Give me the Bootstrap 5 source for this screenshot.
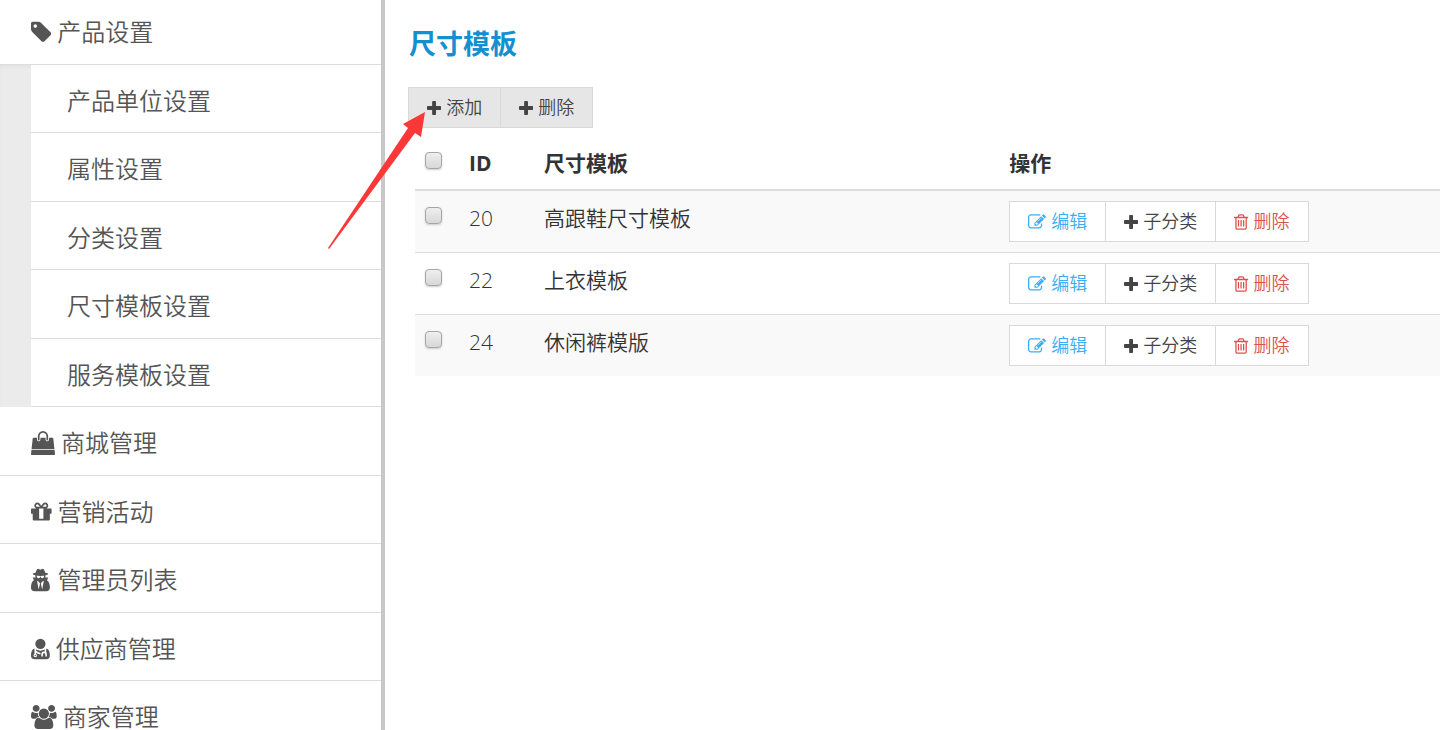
<!DOCTYPE html>
<html lang="zh-CN">
<head>
<meta charset="utf-8">
<meta name="viewport" content="width=device-width, initial-scale=1">
<title>尺寸模板</title>
<link href="https://cdn.jsdelivr.net/npm/bootstrap@5.3.0/dist/css/bootstrap.min.css" rel="stylesheet">
<style>
body { font-family: "Open Sans", "Noto Sans CJK SC", sans-serif; font-weight: 350; color: #333; background: #fff; }
.icon { width: auto; fill: currentColor; flex: none; }

.side { width: 385px; border-right: 4px solid #c8c8c8; overflow: hidden; }
.side a { height: 68px; border-bottom: 1px solid #ddd; color: #555; font-size: 24px; line-height: 36px; padding: 4px 0 0 31px; gap: 6px; }
.side li:nth-child(even) > a { height: 69px; }
.side li:first-child > a.side-open { height: 65px; padding-top: 0; }
.side-sub { padding-left: 31px; background: #ebebeb; box-shadow: inset 0 3px 4px -2px #ddd; }
.side .side-sub a { background: #fff; padding-left: 36px; }
.side .icon { height: 24px; }

.page-main { padding: 23px 0 0 23px; }
.page-title { font-size: 27px; line-height: 42px; font-weight: 700; color: #148fd0; margin: 0 0 22px 1px; }
.tool { --bs-btn-border-radius: 0; --bs-btn-font-size: 18px; --bs-btn-font-weight: 350; --bs-btn-padding-x: 18px; --bs-btn-padding-y: 0; --bs-btn-border-color: #d9d9d9; --bs-btn-hover-border-color: #bbb; --bs-btn-color: #444; --bs-btn-bg: #fff; height: 41px; line-height: 39px; display: inline-flex; align-items: center; gap: 5px; }
.tool .icon { height: 18px; }
.tool-grey { --bs-btn-bg: #e6e6e6; }
.tool-edit { --bs-btn-color: #3aaef5; }
.tool-del { --bs-btn-color: #dd514c; }

.list-wrap { padding-left: 7px; }
.list { --bs-table-color: #333; --bs-table-striped-color: #333; --bs-table-striped-bg: #f9f9f9; table-layout: fixed; font-size: 21px; line-height: 34px; }
.list > :not(caption) > * > * { padding: 10px; border: 0; }
.list > thead > tr > th { font-weight: 700; padding: 18px 10px 9px; border-bottom: 2px solid #ddd; vertical-align: top; }
.list > tbody > tr + tr > td { border-top: 1px solid #ddd; }
.c-tick { width: 44px; }
.c-id { width: 75px; }
.c-ops { width: 43%; }
.tick { appearance: none; display: block; width: 17px; height: 17px; margin: 6px 0 0; border: 1px solid #a6a6a6; border-radius: 4px; background: linear-gradient(#eee, #d8d8d8); box-shadow: 0 1px 2px #ccc; }
.tick:checked { background: #3aaef5; }

.pointer { position: absolute; left: 327px; top: 111px; width: 99px; height: 139px; pointer-events: none; }
</style>
</head>
<body>
<svg class="d-none" aria-hidden="true">
  <defs>
  <path id="plus" d="M1600 736v192q0 40-28 68t-68 28h-416v416q0 40-28 68t-68 28h-192q-40 0-68-28t-28-68v-416h-416q-40 0-68-28t-28-68v-192q0-40 28-68t68-28h416v-416q0-40 28-68t68-28h192q40 0 68 28t28 68v416h416q40 0 68 28t28 68z"/>
  <path id="edit" d="M888 1184l116-116-152-152-116 116v56h96v96h56zm440-720q-16-16-33 1l-350 350q-17 17-1 33t33-1l350-350q17-17 1-33zm80 594v190q0 119-84.500 203.500t-203.500 84.500h-832q-119 0-203.500-84.500t-84.500-203.500v-832q0-119 84.500-203.500t203.500-84.500h832q63 0 117 25 15 7 18 23 3 17-9 29l-49 49q-14 14-32 8-23-6-45-6h-832q-66 0-113 47t-47 113v832q0 66 47 113t113 47h832q66 0 113-47t47-113v-126q0-13 9-22l64-64q15-15 35-7t20 29zm-96-738l288 288-672 672h-288v-288zm444 132l-92 92-288-288 92-92q28-28 68-28t68 28l152 152q28 28 28 68t-28 68z"/>
  <path id="trash" d="M704 736v576q0 14-9 23t-23 9h-64q-14 0-23-9t-9-23v-576q0-14 9-23t23-9h64q14 0 23 9t9 23zm256 0v576q0 14-9 23t-23 9h-64q-14 0-23-9t-9-23v-576q0-14 9-23t23-9h64q14 0 23 9t9 23zm256 0v576q0 14-9 23t-23 9h-64q-14 0-23-9t-9-23v-576q0-14 9-23t23-9h64q14 0 23 9t9 23zm128 724v-948h-896v948q0 22 7 40.500t14.500 27 10.500 8.500h832q3 0 10.500-8.500t14.500-27 7-40.500zm-672-1076h448l-48-117q-7-9-17-11h-317q-10 2-17 11zm928 32v64q0 14-9 23t-23 9h-96v948q0 83-47 143.500t-113 60.500h-832q-66 0-113-58.500t-47-141.500v-952h-96q-14 0-23-9t-9-23v-64q0-14 9-23t23-9h309l70-167q15-37 54-63t79-26h320q40 0 79 26t54 63l70 167h309q14 0 23 9t9 23z"/>
  </defs>
</svg>

<div class="d-flex min-vh-100 position-relative">
  <nav class="side flex-shrink-0 vh-100" aria-label="主菜单">
    <ul class="list-unstyled m-0">
      <li>
        <a href="#" class="side-open d-flex align-items-center text-decoration-none"><svg class="icon" viewBox="128 0 1515 1792"><path d="M576 448q0-53-37.500-90.500t-90.500-37.500-90.500 37.500-37.500 90.500 37.500 90.500 90.500 37.500 90.500-37.500 37.500-90.500zm1067 576q0 53-37 90l-491 492q-39 37-91 37-53 0-90-37l-715-716q-38-37-64.500-101t-26.500-117v-416q0-52 38-90t90-38h416q53 0 117 26.500t102 64.500l715 714q37 39 37 91z"/></svg>产品设置</a>
        <ul class="side-sub list-unstyled m-0">
          <li><a href="#" class="d-flex align-items-center text-decoration-none">产品单位设置</a></li>
          <li><a href="#" class="d-flex align-items-center text-decoration-none">属性设置</a></li>
          <li><a href="#" class="d-flex align-items-center text-decoration-none">分类设置</a></li>
          <li><a href="#" class="d-flex align-items-center text-decoration-none">尺寸模板设置</a></li>
          <li><a href="#" class="d-flex align-items-center text-decoration-none">服务模板设置</a></li>
        </ul>
      </li>
      <li><a href="#" class="d-flex align-items-center text-decoration-none"><svg class="icon" viewBox="0 0 1792 1792"><path d="M1757 1408l35 313q3 28-16 50-19 21-48 21h-1664q-29 0-48-21-19-22-16-50l35-313h1722zm-93-839l86 775h-1708l86-775q3-24 21-40.500t43-16.500h256v128q0 53 37.500 90.500t90.500 37.500 90.500-37.500 37.500-90.500v-128h384v128q0 53 37.500 90.500t90.500 37.500 90.500-37.500 37.500-90.500v-128h256q25 0 43 16.500t21 40.500zm-384-185v256q0 26-19 45t-45 19-45-19-19-45v-256q0-106-75-181t-181-75-181 75-75 181v256q0 26-19 45t-45 19-45-19-19-45v-256q0-159 112.500-271.500t271.500-112.500 271.500 112.500 112.500 271.500z"/></svg>商城管理</a></li>
      <li><a href="#" class="d-flex align-items-center text-decoration-none"><svg class="icon" viewBox="128 0 1536 1792"><path d="M1056 1356v-716h-320v716q0 25 18 38.500t46 13.500h192q28 0 46-13.500t18-38.500zm-456-844h195l-126-161q-26-31-69-31-40 0-68 28t-28 68 28 68 68 28zm688-96q0-40-28-68t-68-28q-43 0-69 31l-125 161h194q40 0 68-28t28-68zm376 256v320q0 14-9 23t-23 9h-96v416q0 40-28 68t-68 28h-1088q-40 0-68-28t-28-68v-416h-96q-14 0-23-9t-9-23v-320q0-14 9-23t23-9h440q-93 0-158.500-65.500t-65.500-158.500 65.500-158.500 158.500-65.500q107 0 168 77l128 165 128-165q61-77 168-77 93 0 158.500 65.500t65.500 158.500-65.500 158.500-158.500 65.500h440q14 0 23 9t9 23z"/></svg>营销活动</a></li>
      <li><a href="#" class="d-flex align-items-center text-decoration-none"><svg class="icon" viewBox="128 -64 1536 1792"><path d="M704 1536l96-448-96-128-128-64zm256 0l128-640-128 64-96 128zm160-1010q-2-4-4-6-10-8-96-8-70 0-167 19-7 2-21 2t-21-2q-97-19-167-19-86 0-96 8-2 2-4 6 2 18 4 27 2 3 7.500 6.500t7.500 10.500q2 4 7.500 20.500t7 20.500 7.500 17 8.500 17 9 14 12 13.500 14 9.500 17.500 8 20.500 4 24.500 2q36 0 59-12.500t32.500-30 14.500-34.500 11.500-29.500 17.500-12.500h12q11 0 17.500 12.500t11.500 29.500 14.500 34.500 32.500 30 59 12.500q13 0 24.500-2t20.500-4 17.500-8 14-9.500 12-13.500 9-14 8.500-17 7.500-17 7-20.500 7.500-20.500q2-7 7.500-10.500t7.500-6.500q2-9 4-27zm416 879q0 121-73 190t-194 69h-874q-121 0-194-69t-73-190q0-61 4.500-118t19-125.500 37.500-123.500 63.500-103.500 93.500-74.500l-90-220h214q-22-64-22-128 0-12 2-32-194-40-194-96 0-57 210-99 17-62 51.500-134t70.500-114q32-37 76-37 30 0 84 31t84 31 84-31 84-31q44 0 76 37 36 42 70.500 114t51.500 134q210 42 210 99 0 56-194 96 7 81-20 160h214l-82 225q63 33 107.500 96.500t65.500 143.500 29 151.500 8 157.500z"/></svg>管理员列表</a></li>
      <li><a href="#" class="d-flex align-items-center text-decoration-none"><svg class="icon" viewBox="0 0 1408 1792"><circle cx="704" cy="512" r="384"/><path d="M267 1664Q0 1650 0 1405Q0 920 260 860Q480 1020 704 1020T1148 860Q1408 920 1408 1405Q1408 1650 1141 1664Z"/><path d="M320 820V1300M1080 820V1130M830 1460V1300Q830 1150 980 1150T1130 1300V1460M350 1060Q520 1240 704 1240" fill="none" stroke="#fff" stroke-width="120"/><circle cx="320" cy="1380" r="130" fill="#fff"/><circle cx="320" cy="1380" r="50"/></svg>供应商管理</a></li>
      <li><a href="#" class="d-flex align-items-center text-decoration-none"><svg class="icon" viewBox="0 0 1920 1792"><path d="M593 896q-162 5-265 128h-134q-82 0-138-40.500t-56-118.500q0-353 124-353 6 0 43.500 21t97.500 42.500 119 21.500q67 0 133-23-5 37-5 66 0 139 81 256zm1071 637q0 120-73 189.500t-194 69.500h-874q-121 0-194-69.500t-73-189.500q0-53 3.500-103.500t14-109 26.500-108.500 43-97.500 62-81 85.500-53.500 111.500-20q10 0 43 21.500t73 48 107 48 135 21.500 135-21.500 107-48 73-48 43-21.500q61 0 111.500 20t85.500 53.500 62 81 43 97.500 26.500 108.500 14 109 3.500 103.500zm-1024-1277q0 106-75 181t-181 75-181-75-75-181 75-181 181-75 181 75 75 181zm704 384q0 159-112.500 271.500t-271.500 112.500-271.500-112.500-112.500-271.500 112.500-271.500 271.500-112.500 271.500 112.500 112.500 271.500zm576 225q0 78-56 118.500t-138 40.500h-134q-103-123-265-128 81-117 81-256 0-29-5-66 66 23 133 23 59 0 119-21.500t97.500-42.500 43.500-21q124 0 124 353zm-128-609q0 106-75 181t-181 75-181-75-75-181 75-181 181-75 181 75 75 181z"/></svg>商家管理</a></li>
    </ul>
  </nav>

  <main class="page-main flex-grow-1">
    <h1 class="page-title">尺寸模板</h1>
    <div class="btn-group d-flex" role="group" aria-label="批量操作">
      <button type="button" class="btn tool tool-grey flex-grow-0"><svg class="icon" viewBox="192 -64 1408 1792"><use href="#plus"/></svg>添加</button>
      <button type="button" class="btn tool tool-grey flex-grow-0"><svg class="icon" viewBox="192 -64 1408 1792"><use href="#plus"/></svg>删除</button>
    </div>
    <div class="list-wrap">
      <table class="table table-striped list m-0">
        <colgroup><col class="c-tick"><col class="c-id"><col><col class="c-ops"></colgroup>
        <thead>
          <tr><th scope="col"><input type="checkbox" class="tick" aria-label="全选"></th><th scope="col">ID</th><th scope="col">尺寸模板</th><th scope="col">操作</th></tr>
        </thead>
        <tbody>
          <tr><td><input type="checkbox" class="tick" aria-label="选择 20"></td><td>20</td><td>高跟鞋尺寸模板</td><td><div class="btn-group d-flex" role="group" aria-label="操作 20"><button type="button" class="btn tool tool-edit flex-grow-0"><svg class="icon" viewBox="0 0 1792 1792"><use href="#edit"/></svg>编辑</button><button type="button" class="btn tool flex-grow-0"><svg class="icon" viewBox="192 -64 1408 1792"><use href="#plus"/></svg>子分类</button><button type="button" class="btn tool tool-del flex-grow-0"><svg class="icon" viewBox="192 0 1408 1792"><use href="#trash"/></svg>删除</button></div></td></tr>
          <tr><td><input type="checkbox" class="tick" aria-label="选择 22"></td><td>22</td><td>上衣模板</td><td><div class="btn-group d-flex" role="group" aria-label="操作 22"><button type="button" class="btn tool tool-edit flex-grow-0"><svg class="icon" viewBox="0 0 1792 1792"><use href="#edit"/></svg>编辑</button><button type="button" class="btn tool flex-grow-0"><svg class="icon" viewBox="192 -64 1408 1792"><use href="#plus"/></svg>子分类</button><button type="button" class="btn tool tool-del flex-grow-0"><svg class="icon" viewBox="192 0 1408 1792"><use href="#trash"/></svg>删除</button></div></td></tr>
          <tr><td><input type="checkbox" class="tick" aria-label="选择 24"></td><td>24</td><td>休闲裤模版</td><td><div class="btn-group d-flex" role="group" aria-label="操作 24"><button type="button" class="btn tool tool-edit flex-grow-0"><svg class="icon" viewBox="0 0 1792 1792"><use href="#edit"/></svg>编辑</button><button type="button" class="btn tool flex-grow-0"><svg class="icon" viewBox="192 -64 1408 1792"><use href="#plus"/></svg>子分类</button><button type="button" class="btn tool tool-del flex-grow-0"><svg class="icon" viewBox="192 0 1408 1792"><use href="#trash"/></svg>删除</button></div></td></tr>
        </tbody>
      </table>
    </div>
  </main>

  <!-- arrow pointing at the add button -->
  <svg class="pointer" viewBox="0 0 99 139" aria-hidden="true"><path d="M98 1L76 13L81 17L1 137L2 138L88 22L94 26Z" fill="#fb3838"/></svg>
</div>
<script src="https://cdn.jsdelivr.net/npm/bootstrap@5.3.0/dist/js/bootstrap.bundle.min.js"></script>
</body>
</html>
